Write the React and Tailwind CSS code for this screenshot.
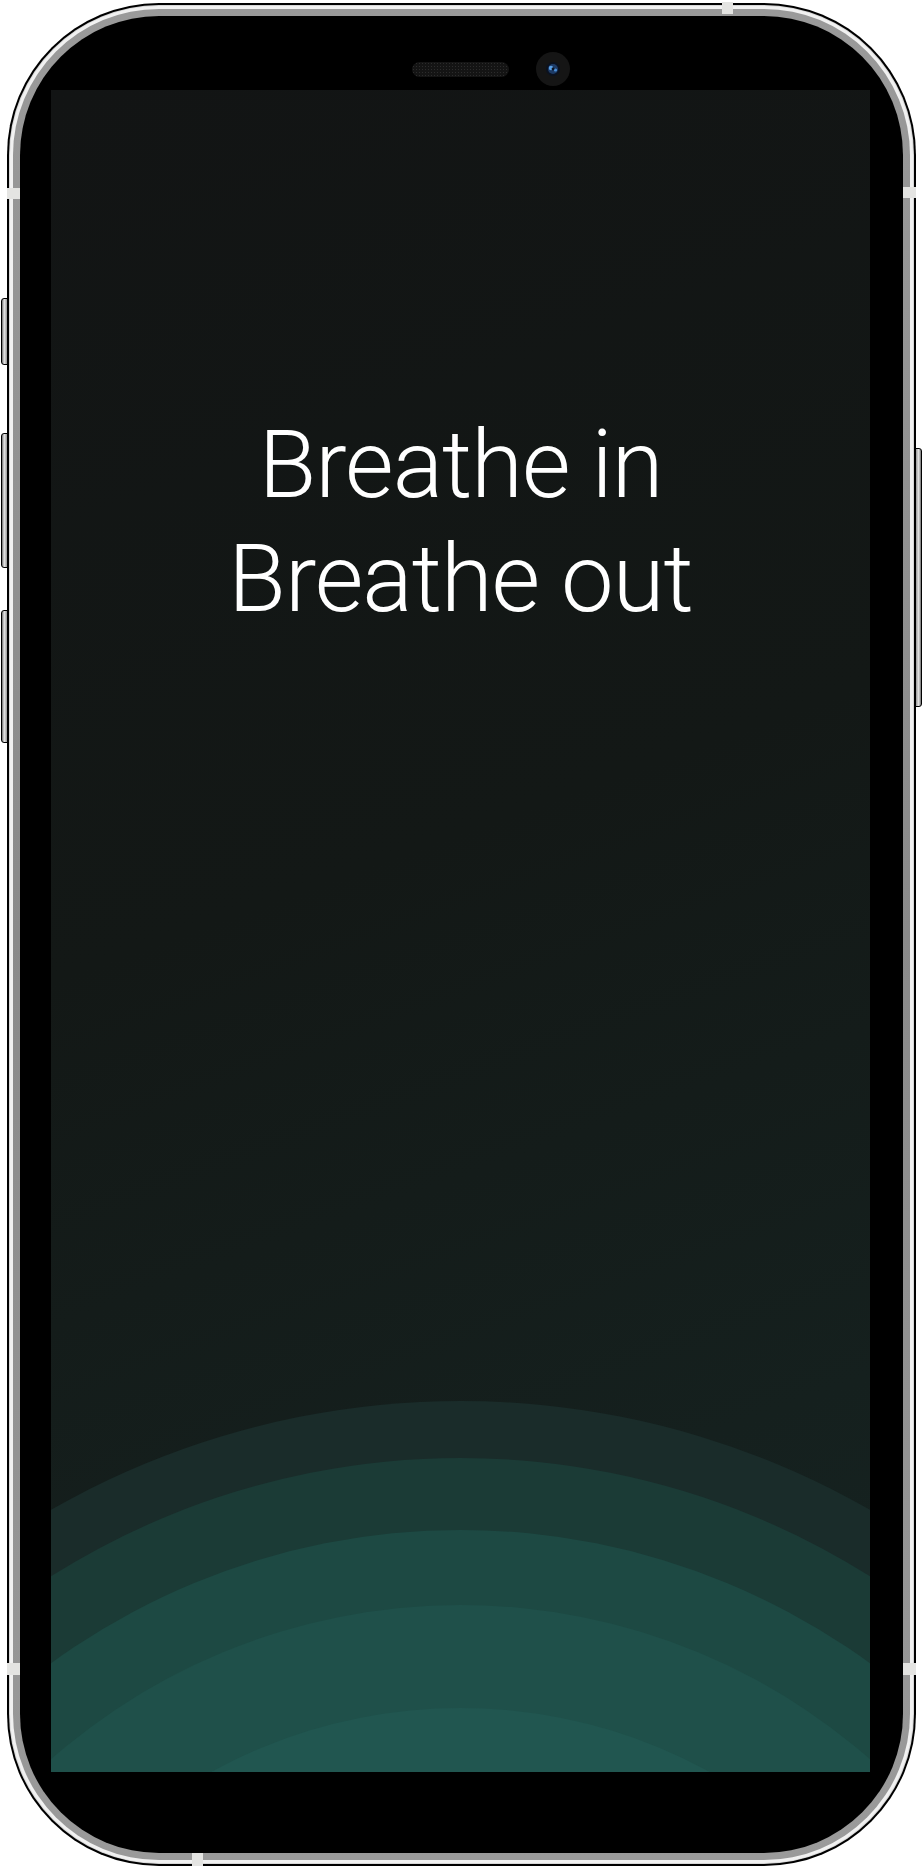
import React from "react";

function Arcs() {
  return (
    <svg width="819" height="372" viewBox="0 0 819 372" className="block shrink-0">
      <circle cx="409.5" cy="826" r="825" fill="#1a2c2a" />
      <circle cx="409.5" cy="826" r="768" fill="#1b3b36" />
      <circle cx="409.5" cy="826" r="696" fill="#1d4943" />
      <circle cx="409.5" cy="826" r="621" fill="#1f504a" />
      <circle cx="409.5" cy="826" r="518" fill="#215650" />
    </svg>
  );
}

function Camera() {
  return (
    <svg width="34" height="34" viewBox="0 0 34 34" className="block">
      <circle cx="17" cy="17" r="17" fill="#151515" />
      <circle cx="17" cy="17" r="7" fill="#0b1220" />
      <circle cx="17" cy="17" r="5" fill="#1d3b66" />
      <circle cx="15" cy="16" r="2.2" fill="#5aa0e6" />
      <circle cx="19.5" cy="18" r="1.6" fill="#4a8fd8" />
      <circle cx="17" cy="17" r="1.4" fill="#0b1220" />
    </svg>
  );
}

export default function App() {
  return (
    <div className="relative w-[923px] h-[1875px] bg-white pt-[3px] pl-[7px] overflow-hidden">
      {/* phone body */}
      <div className="w-[909px] h-[1863px] rounded-[152px] bg-black p-[2px]">
        <div className="w-full h-full rounded-[150px] bg-[#d6d6d6] p-[1px]">
          <div className="w-full h-full rounded-[149px] bg-[#f1f1f1] p-[3px]">
            <div className="w-full h-full rounded-[146px] bg-[linear-gradient(180deg,#9a9a9a,#8a8a8a_50%,#9a9a9a)] p-[7px]">
              <div className="w-full h-full rounded-[139px] bg-black flex flex-col pl-[31px] pr-[33px] pb-[81px]">
                {/* top bezel: speaker + camera */}
                <div className="h-[74px] pt-[32px] flex justify-center items-center shrink-0">
                  <div className="w-[61px]" />
                  <div className="w-[97px] h-[15px] rounded-full bg-[#141414] bg-[radial-gradient(#2c2c2c_0.8px,transparent_1px)] bg-[length:3px_3px]" />
                  <div className="ml-[27px]">
                    <Camera />
                  </div>
                </div>
                {/* screen */}
                <div className="flex-1 flex flex-col overflow-hidden bg-[linear-gradient(160deg,#121414_0%,#131816_45%,#15201e_80%,#162422_100%)]">
                  <div className="pt-[318px] flex flex-col items-center text-white font-light text-[94px] leading-[114px] tracking-[-1px] [font-family:Roboto,'Liberation_Sans',sans-serif]">
                    <div>Breathe in</div>
                    <div>Breathe out</div>
                  </div>
                  <div className="flex-1" />
                  <Arcs />
                </div>
              </div>
            </div>
          </div>
        </div>
      </div>

      {/* antenna bands */}
      <div className="absolute left-[722px] top-[2px] w-[11px] h-[12px] bg-[#e4e4e2]" />
      <div className="absolute left-[7px] top-[188px] w-[13px] h-[11px] bg-[#e4e4e2]" />
      <div className="absolute left-[903px] top-[187px] w-[13px] h-[11px] bg-[#e4e4e2]" />
      <div className="absolute left-[7px] top-[1663px] w-[13px] h-[12px] bg-[#e4e4e2]" />
      <div className="absolute left-[903px] top-[1663px] w-[13px] h-[12px] bg-[#e4e4e2]" />
      <div className="absolute left-[192px] top-[1853px] w-[11px] h-[13px] bg-[#e4e4e2]" />

      {/* side buttons */}
      <div className="absolute left-[1px] top-[298px] w-[7px] h-[67px] rounded-l-[3px] border border-black bg-[linear-gradient(90deg,#6d6d6d,#e6e6e6_45%,#9a9a9a)]" />
      <div className="absolute left-[1px] top-[433px] w-[7px] h-[135px] rounded-l-[3px] border border-black bg-[linear-gradient(90deg,#6d6d6d,#e6e6e6_45%,#9a9a9a)]" />
      <div className="absolute left-[1px] top-[610px] w-[7px] h-[133px] rounded-l-[3px] border border-black bg-[linear-gradient(90deg,#6d6d6d,#e6e6e6_45%,#9a9a9a)]" />
      <div className="absolute left-[915px] top-[448px] w-[7px] h-[259px] rounded-r-[3px] border border-black bg-[linear-gradient(90deg,#9a9a9a,#e6e6e6_55%,#6d6d6d)]" />
    </div>
  );
}
